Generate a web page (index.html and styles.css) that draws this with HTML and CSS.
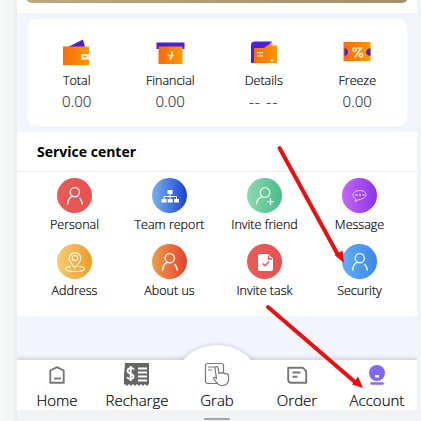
FILE: index.html
```html
<!DOCTYPE html>
<html lang="en">
<head>
<meta charset="utf-8">
<title>Account</title>
<link rel="stylesheet" href="styles.css">
</head>
<body>
<svg class="defs" width="0" height="0">
  <defs>
    <linearGradient id="orange"><stop offset="0" stop-color="#ff6a0c"/><stop offset="1" stop-color="#ff9800"/></linearGradient>
    <symbol id="person" viewBox="0 0 35 35"><g fill="none" stroke="#fff" stroke-opacity=".9" stroke-width="1.5" stroke-linecap="round"><circle cx="17.8" cy="14.2" r="4.6"/><path d="M10.7 26c.3-4 2-6.700 4.600-7.600M22.900 20.400c1.400 1.500 2.100 3.300 2.300 5.600"/></g></symbol>
  </defs>
</svg>
<main class="phone">
  <header class="top"><div class="banner"></div></header>
  <section class="wallet">
    <div class="stat">
      <svg width="36" height="32"><path fill="#4a1fe0" d="M9 15 24 7.500l2 7.500z"/><path fill="url(#orange)" d="M4 14.500h26v8h-8v5h8V33H4z"/><path fill="#fff4d8" d="M22 22h8v5h-8z"/><path fill="#ff9500" d="M24.500 23.800h3v1.500h-3z"/></svg>
      <span class="name">Total</span><span class="value">0.00</span>
    </div>
    <div class="stat">
      <svg width="36" height="32"><path fill="#4a1fe0" d="M4.500 10.500h28V17h-28z"/><path fill="url(#orange)" d="M6.500 14.500h24V32h-24z"/><path fill="none" stroke="#fff4d8" stroke-width="1.700" d="M15.500 23.500h6M20 19v4.500l-2 4"/></svg>
      <span class="name">Financial</span><span class="value">0.00</span>
    </div>
    <div class="stat">
      <svg width="36" height="32"><path fill="#4a1fe0" d="M9 9.500h17l-2 4v17.500H5V13q0-3.500 4-3.500z"/><path fill="#ff9b42" d="m25 10 2 2-1 2h-4z"/><path fill="url(#orange)" d="M8 16h10l3-2.500h10V31H8z"/><path stroke="#fff4d8" stroke-width="1.200" d="M11 20.700h6M11 23.800h6M24.500 28.500h3M26 27v3"/></svg>
      <span class="name">Details</span><span class="value dashes">-- --</span>
    </div>
    <div class="stat">
      <svg width="36" height="32"><path fill="url(#orange)" d="M4.500 10h27v19h-27z"/><path fill="#4a1fe0" d="M5.500 16q3.500 1 3.500 4t-3.500 4zM31.500 16Q27 17 27 20t4.500 4z"/><g fill="none" stroke="#fff4d8" stroke-width="1.500"><circle cx="15.500" cy="17.700" r="1.700"/><circle cx="22" cy="23.300" r="1.700"/><path d="m22.700 15.500-7 10M18 16h5"/></g></svg>
      <span class="name">Freeze</span><span class="value">0.00</span>
    </div>
  </section>
  <section class="service">
    <h2>Service center</h2>
    <div class="grid">
      <a class="item"><i class="disc red"><svg width="35" height="35"><use href="#person"/></svg></i><span>Personal</span></a>
      <a class="item"><i class="disc blue"><svg width="35" height="35"><path fill="#fff" d="M15.500 12h5v4h-5zM9.500 21h5v3.500h-5zM15.700 21h5v3.500h-5zM22 21h5v3.500h-5z"/><path fill="none" stroke="#fff" d="M18 16v5M12 21v-2.500h12.500V21"/></svg></i><span>Team report</span></a>
      <a class="item"><i class="disc green"><svg width="35" height="35"><g fill="none" stroke="#f3fff7" stroke-width="1.300" stroke-linecap="round"><circle cx="18" cy="14.500" r="4.800"/><path d="M9.500 26c.4-4 2.600-6.300 5.500-7M20.500 23.700h6M23.500 20.700v6"/></g></svg></i><span>Invite friend</span></a>
      <a class="item"><i class="disc purple"><svg width="35" height="35"><g fill="none" stroke="#f0c8ff" stroke-width="1"><path d="M14 21.200C9 19 10.500 12.500 18 12.500s9 8-1.500 9.200L13 23.500z"/><path stroke-width="1.500" stroke-dasharray="2 1.500" d="M13.500 17h9"/></g></svg></i><span>Message</span></a>
      <a class="item"><i class="disc yellow"><svg width="35" height="35"><g fill="none" stroke="#fff8df" stroke-width="1.200"><path d="M18 24c-3-4-5.800-6.500-5.800-9.500a5.800 5.800 0 0 1 11.600 0C23.800 17.500 21 20 18 24z"/><circle cx="18" cy="14" r="2.700"/><path d="M14 22.500c-4 .3-5.500 1.500-5.500 2.500 0 3.300 19 3.300 19 0 0-1-1.500-2.200-5.500-2.500"/></g></svg></i><span>Address</span></a>
      <a class="item"><i class="disc orange"><svg width="35" height="35"><use href="#person"/></svg></i><span>About us</span></a>
      <a class="item"><i class="disc red"><svg width="35" height="35"><path fill="#fff" d="M13 10h8l5 4.500V25q0 2-2 2H13q-2 0-2-2V12q0-2 2-2z"/><path fill="none" stroke="#e95454" stroke-width="1.400" d="m15.500 19.500 2.500 2.300 4-4.300M21.500 11.500V15H25"/></svg></i><span>Invite task</span></a>
      <a class="item"><i class="disc sky"><svg width="35" height="35"><use href="#person"/></svg></i><span>Security</span></a>
    </div>
  </section>
  <nav class="tabs">
    <a class="tab"><svg width="26" height="28"><g fill="none" stroke="#777" stroke-width="1.900"><path d="M6.300 10.500 13 7.200l6.700 3.300v12.200H6.300z" stroke-linejoin="round"/><path d="M10 18.500h7"/></g></svg><span>Home</span></a>
    <a class="tab"><svg width="26" height="28"><path fill="#666" d="M1 3h24v21l-2 2-2-2-2 2-2-2-2 2-2-2-2 2-2-2-2 2-2-2-2 2-2-2-2 2z"/><path fill="none" stroke="#fff" stroke-width="1.900" d="M10 9.500C8 7 3.500 8 3.500 11s6 2.500 6 5.500-4.500 3.500-6.500.8M6.700 6v15M14 8.500h9M14 12.500h9M14 16.500h9M14 20.500h9"/></svg><span>Recharge</span></a>
    <a class="tab"><svg width="26" height="28"><g fill="#fff" stroke="#777" stroke-width="1.200" stroke-linejoin="round"><rect x="1.500" y="3.500" width="18" height="20" rx="2"/><path d="M4 7h7M4 10h4"/><path d="M12.500 18.500 11 8.500c0-2.500 2.700-2.500 3.200 0l.8 5c1-1.300 2.500-1 3 0 1-1 2.500-.7 3 .5 1.500-.8 3.300 0 3.500 1.500 1 6-1 10-6 10-4 0-5-1.500-9-7 0-1.700 1.500-1.700 3 0z"/></g></svg><span>Grab</span></a>
    <a class="tab"><svg width="26" height="28"><g fill="none" stroke="#777" stroke-width="1.900"><path d="M4.200 7.700h14.500l3.500 3.500v11.500H7.500q-3.300 0-3.300-3z" stroke-linejoin="round"/><path d="M8.500 12.500h8M8.500 16.800h5"/></g></svg><span>Order</span></a>
    <a class="tab"><svg width="26" height="28"><circle cx="13" cy="13" r="8" fill="#8266f5"/><path fill="#fff" d="M11 15h4v2.500h-4z"/><path stroke="#8266f5" stroke-width="2.500" stroke-linecap="round" d="M7.500 23.500h11"/></svg><span>Account</span></a>
  </nav>
</main>
<div class="handle"></div>
<svg class="arrows" width="421" height="421"><g stroke="#eb1010" stroke-width="4" stroke-linecap="round"><path d="m279.500 148 58 106M268 307l87 75"/></g><path fill="#eb1010" d="m344 263-9.500-8 8-4.500zM363 388l-11-3.500 6-8z"/></svg>
</body>
</html>
```
FILE: styles.css
```css
* { box-sizing: border-box; }
body {
  margin: 0;
  height: 421px;
  overflow: hidden;
  padding-left: 17px;
  background: linear-gradient(90deg, #f7faf8 0, #f4f6f5 12px, #eceeef 17px, #f2f3f5 17px);
  font-family: "Open Sans", "Noto Sans", sans-serif;
  font-weight: 350;
  color: #000;
  -webkit-text-stroke: 0.2px;
}
.defs { position: absolute; }
.phone {
  display: flex;
  flex-direction: column;
  width: 400px;
  height: 410px;
  background: #f2f5fe;
}
.top { height: 13px; padding: 0 10px; background: #fff; }
.banner { height: 3px; border-radius: 0 0 6px 6px / 0 0 3px 3px; background: linear-gradient(90deg, #bda684, #a48e6d); }
.wallet {
  display: grid;
  grid-template-columns: repeat(4, 1fr);
  height: 107px;
  margin: 6px 10px;
  padding: 13px 3px 0;
  border-radius: 9px;
  background: #fff;
}
.stat { display: flex; flex-direction: column; align-items: center; }
.stat svg { flex: none; display: block; height: 40px; }
.name { height: 18px; font-size: 12.5px; line-height: 18px; white-space: nowrap; }
.value { font-size: 15px; line-height: 22px; color: #36393e; white-space: nowrap; }
.dashes { letter-spacing: 1.3px; }
.service { height: 184px; background: #fff; }
h2 {
  height: 40px;
  margin: 0;
  padding-left: 20px;
  border-bottom: 1px solid #e9e9eb;
  font-size: 14px;
  font-weight: 700;
  line-height: 40px;
  -webkit-text-stroke: 0;
}
.grid { display: grid; grid-template-columns: repeat(4, 95px); grid-auto-rows: 66px; padding: 6px 10px 0; }
.item { display: flex; flex-direction: column; align-items: center; font-size: 12.500px; line-height: 18px; white-space: nowrap; }
.item span { margin-top: 3px; }
.disc { width: 35px; height: 35px; border-radius: 50%; }
.disc svg { display: block; }
.red { background: linear-gradient(90deg, #e65d58, #e95050); }
.blue { background: linear-gradient(90deg, #7ab4ef, #1940d3); }
.green { background: linear-gradient(90deg, #8bdbb0, #4bba87); }
.purple { background: linear-gradient(90deg, #c666f5, #8934ea); }
.yellow { background: linear-gradient(90deg, #f4cd72, #ee9c28); }
.orange { background: linear-gradient(90deg, #eba04b, #e7412e); }
.sky { background: linear-gradient(90deg, #63aef2, #3987ee); }
.tabs {
  position: relative;
  display: grid;
  grid-template-columns: repeat(5, 80px);
  height: 50px;
  margin-top: auto;
  background: #fff;
  box-shadow: 0 -1px 5px #0003;
  clip-path: inset(-30px 0 0);
}
.tabs::before {
  content: "";
  position: absolute;
  left: 154px;
  top: -15px;
  width: 92px;
  height: 92px;
  border-radius: 50%;
  background: #fff;
  box-shadow: 0 0 5px #0003;
  clip-path: inset(-8px -8px 77px);
}
.tab { position: relative; display: flex; flex-direction: column; align-items: center; font-size: 15px; line-height: 20px; white-space: nowrap; }
.tab svg { display: block; flex: none; }
.tab span { margin-top: 2px; }
.handle { width: 26px; height: 2px; margin: 8px 0 0 187px; border-radius: 1px; background: #a5a6a8; }
.arrows { position: absolute; left: 0; top: 0; }
```
